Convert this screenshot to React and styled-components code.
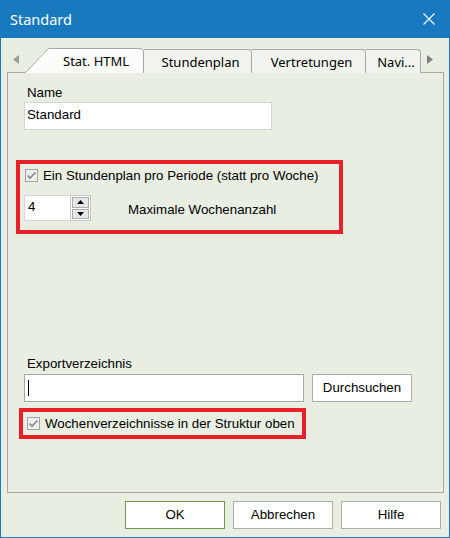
import React from 'react';
import styled, { createGlobalStyle } from 'styled-components';

const GlobalStyle = createGlobalStyle`
  html, body { margin: 0; padding: 0; background: #e9eee3; }
  * { box-sizing: border-box; }
`;

const Window = styled.div`
  width: 450px;
  height: 538px;
  display: flex;
  flex-direction: column;
  background: #e9eee3;
  border: 1px solid #1979be;
  border-top: 0;
  font-family: 'Liberation Sans', Arial, sans-serif;
  font-size: 13.3px;
  color: #000;
`;

const TitleBar = styled.div`
  height: 38px;
  flex-shrink: 0;
  margin: 0 -1px;
  display: flex;
  align-items: center;
  justify-content: space-between;
  padding: 0 15px 1px 10px;
  background: #1979be;
  color: #fff;
  font-family: 'Noto Sans', 'Open Sans', sans-serif;
  font-size: 14.5px;
`;

const CloseIcon = () => (
  <svg width="12" height="12" viewBox="0 0 12 12">
    <path d="M0.5 0.5 L11.5 11.5 M11.5 0.5 L0.5 11.5" stroke="#fff" strokeWidth="1.1" fill="none" />
  </svg>
);

const Body = styled.div`
  display: flex;
  flex-direction: column;
  padding: 10px 5px 0 6px;
`;

const TabRow = styled.div`
  display: flex;
  align-items: flex-end;
  height: 25px;
  margin-bottom: -1px;
  position: relative;
  z-index: 1;
  font-family: 'Noto Sans', 'Open Sans', sans-serif;
  font-size: 13px;
`;

const ArrowSlot = styled.div`
  width: ${p => p.$w}px;
  height: 25px;
  display: flex;
  align-items: center;
  justify-content: center;
  padding-bottom: 3px;
`;

const ActiveTab = styled.div`
  position: relative;
  width: 119px;
  height: 25px;
  display: flex;
  align-items: center;
  padding: 1px 13px 0 38px;
  svg { position: absolute; left: 0; top: 0; }
  span { position: relative; }
`;

const Tab = styled.div`
  width: ${p => p.$w}px;
  height: 24px;
  display: flex;
  align-items: center;
  justify-content: center;
  padding: 1px 0 0 6px;
  background: #f1f4ee;
  border: 1px solid #a8a8a8;
  border-left: 0;
  border-bottom: 0;
  border-top-right-radius: 4px;
  white-space: nowrap;
`;

const Panel = styled.div`
  height: 421px;
  border: 1px solid #a8a8a8;
  display: flex;
  flex-direction: column;
  align-items: flex-start;
`;

const Label = styled.div`
  line-height: 15px;
  margin: ${p => p.$top}px 0 0 19px;
`;

const TextInput = styled.div`
  width: ${p => p.$w}px;
  height: 28px;
  background: #fff;
  border: 1px solid ${p => p.$border || '#d6d6d6'};
  display: flex;
  align-items: center;
  padding: 0 0 4px 2px;
  margin-left: ${p => p.$left || 0}px;
  margin-top: ${p => p.$top || 0}px;
`;

const Caret = styled.div`
  width: 1px;
  height: 16px;
  background: #000;
  margin: 3px 0 0 1px;
`;

const Highlight = styled.div`
  width: ${p => p.$w}px;
  height: ${p => p.$h}px;
  margin: ${p => p.$top}px 0 0 ${p => p.$left}px;
  border: 4px solid #e8202a;
  display: flex;
  flex-direction: column;
  justify-content: ${p => p.$center ? 'center' : 'flex-start'};
  padding: ${p => p.$pad};
`;

const CheckRow = styled.label`
  display: flex;
  align-items: center;
  gap: 5px;
  line-height: 15px;
  height: 15px;
  white-space: nowrap;
`;

const Box = styled.span`
  width: 13px;
  height: 13px;
  border: 1px solid #a3a3a3;
  background: #efefef;
  display: flex;
  align-items: center;
  justify-content: center;
`;

const CheckBox = () => (
  <Box>
    <svg width="11" height="11" viewBox="0 0 11 11">
      <path d="M1.5 5.5 L4 8 L9.5 2.5" stroke="#888" strokeWidth="1.6" fill="none" />
    </svg>
  </Box>
);

const SpinRow = styled.div`
  display: flex;
  align-items: center;
  margin: 12px 0 0 -1px;
`;

const SpinField = styled.div`
  display: flex;
  height: 26px;
`;

const SpinValue = styled.div`
  width: 46px;
  background: #fff;
  border: 1px solid #d6d6d6;
  border-right: 0;
  display: flex;
  align-items: center;
  padding: 0 0 4px 3px;
`;

const SpinButtons = styled.div`
  width: 21px;
  display: flex;
  flex-direction: column;
  border: 1px solid #c6c6c6;
  background: #fff;
  padding: 1px;
  gap: 1px;
`;

const SpinButton = styled.div`
  flex: 1;
  background: #e6e6e6;
  border: 1px solid #adadad;
  display: flex;
  align-items: center;
  justify-content: center;
`;

const SpinLabel = styled.div`
  margin-left: 37px;
  padding-top: 2px;
`;

const ExportRow = styled.div`
  display: flex;
  gap: 8px;
  margin: 3px 0 0 16px;
`;

const Button = styled.button`
  width: 100px;
  height: 28px;
  padding: 0 0 1px;
  background: #fff;
  border: 1px solid ${p => p.$default ? '#6f9650' : '#adadad'};
  font-family: 'Liberation Sans', Arial, sans-serif;
  font-size: 13.3px;
  color: #000;
`;

const Footer = styled.div`
  display: flex;
  justify-content: flex-end;
  gap: 8px;
  padding: 8px 8px 0 0;
`;

const Triangle = ({ dir, color }) => (
  <svg width="6" height="9" viewBox="0 0 6 9">
    <path d={dir === 'left' ? 'M6 0 L0 4.5 L6 9 Z' : 'M0 0 L6 4.5 L0 9 Z'} fill={color} />
  </svg>
);

const SpinArrow = ({ up }) => (
  <svg width="7" height="4" viewBox="0 0 7 4">
    <path d={up ? 'M0 4 L3.5 0 L7 4 Z' : 'M0 0 L3.5 4 L7 0 Z'} fill="#000" />
  </svg>
);

const App = () => (
  <>
    <GlobalStyle />
    <Window>
      <TitleBar>
        <span>Standard</span>
        <CloseIcon />
      </TitleBar>
      <Body>
        <TabRow>
          <ArrowSlot $w={18}>
            <Triangle dir="left" color="#9a9a9a" />
          </ArrowSlot>
          <ActiveTab>
            <svg width="119" height="25" viewBox="0 0 119 25">
              <path d="M0 25 L23 0.5 L115 0.5 Q118.5 0.5 118.5 4 L118.5 25 Z" fill="#fcfdfb" />
              <path d="M0.5 24.5 L23.5 0.5 L115 0.5 Q118.5 0.5 118.5 4 L118.5 25" stroke="#a8a8a8" fill="none" />
            </svg>
            <span>Stat. HTML</span>
          </ActiveTab>
          <Tab $w={108}>Stundenplan</Tab>
          <Tab $w={114}>Vertretungen</Tab>
          <Tab $w={55}>Navi...</Tab>
          <ArrowSlot $w={17}>
            <Triangle dir="right" color="#7d7d7d" />
          </ArrowSlot>
        </TabRow>
        <Panel>
          <Label $top={12}>Name</Label>
          <TextInput $w={248} $left={16} $top={2}>Standard</TextInput>

          <Highlight $w={327} $h={74} $top={30} $left={8} $pad="4px 0 0 5px">
            <CheckRow>
              <CheckBox />
              Ein Stundenplan pro Periode (statt pro Woche)
            </CheckRow>
            <SpinRow>
              <SpinField>
                <SpinValue>4</SpinValue>
                <SpinButtons>
                  <SpinButton><SpinArrow up /></SpinButton>
                  <SpinButton><SpinArrow /></SpinButton>
                </SpinButtons>
              </SpinField>
              <SpinLabel>Maximale Wochenanzahl</SpinLabel>
            </SpinRow>
          </Highlight>

          <Label $top={122}>Exportverzeichnis</Label>
          <ExportRow>
            <TextInput $w={280} $border="#a8a8a8">
              <Caret />
            </TextInput>
            <Button>Durchsuchen</Button>
          </ExportRow>

          <Highlight $w={287} $h={31} $top={6} $left={11} $pad="0 0 0 4px" $center>
            <CheckRow>
              <CheckBox />
              Wochenverzeichnisse in der Struktur oben
            </CheckRow>
          </Highlight>
        </Panel>
      </Body>
      <Footer>
        <Button $default>OK</Button>
        <Button>Abbrechen</Button>
        <Button>Hilfe</Button>
      </Footer>
    </Window>
  </>
);

export default App;
